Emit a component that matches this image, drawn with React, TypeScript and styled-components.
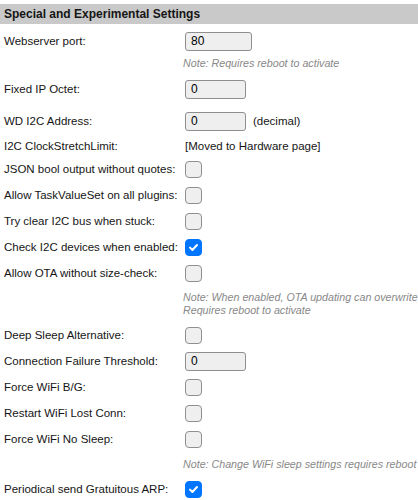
import React from "react";
import styled, { createGlobalStyle } from "styled-components";

const GlobalStyle = createGlobalStyle`
  html, body {
    margin: 0;
    padding: 0;
    background: #fff;
    overflow: hidden;
  }
  body {
    font-family: "Liberation Sans", Arial, sans-serif;
    font-size: 11.5px;
    color: #151515;
  }
`;

const Page = styled.div`
  width: 418px;
  height: 500px;
  overflow: hidden;
  padding-top: 4px;
  box-sizing: border-box;
`;

const Header = styled.div`
  height: 20px;
  background: #c9c9c9;
  font-weight: bold;
  font-size: 12px;
  display: flex;
  align-items: center;
  padding-left: 4px;
  margin-bottom: 4px;
`;

const Row = styled.div<{ $h: number }>`
  height: ${(p) => p.$h}px;
  display: grid;
  grid-template-columns: 185px 1fr;
  align-items: center;
`;

const Label = styled.div`
  padding-left: 4px;
  white-space: nowrap;
`;

const Value = styled.div`
  display: flex;
  align-items: center;
  gap: 7px;
  white-space: nowrap;
`;

const Note = styled.div`
  font-style: italic;
  font-size: 10.7px;
  color: #888;
  line-height: 13px;
  white-space: nowrap;
  margin-left: -2px;
`;

const TextBox = styled.div<{ $w: number }>`
  width: ${(p) => p.$w}px;
  height: 19px;
  box-sizing: border-box;
  background: #efefef;
  border: 1px solid #8f8f8f;
  border-radius: 3px;
  padding-left: 5px;
  display: flex;
  align-items: center;
  font-size: 12px;
  color: #000;
`;

const CheckBox = styled.span<{ $checked?: boolean }>`
  width: 17px;
  height: 17px;
  box-sizing: border-box;
  border-radius: 4px;
  border: 1px solid ${(p) => (p.$checked ? "#0075ff" : "#8f8f8f")};
  background: ${(p) => (p.$checked ? "#0075ff" : "#efefef")};
  display: flex;
  align-items: center;
  justify-content: center;
`;

const Check: React.FC<{ checked?: boolean }> = ({ checked }) => (
  <CheckBox $checked={checked}>
    {checked && (
      <svg width="11" height="11" viewBox="0 0 11 11">
        <path
          d="M2 5.6 L4.4 8 L9 3"
          fill="none"
          stroke="#fff"
          strokeWidth="2"
          strokeLinecap="round"
          strokeLinejoin="round"
        />
      </svg>
    )}
  </CheckBox>
);

type Item =
  | { kind: "text"; label: string; value: string; w: number; h: number; suffix?: string }
  | { kind: "check"; label: string; checked?: boolean; h: number }
  | { kind: "plain"; label: string; value: string; h: number }
  | { kind: "note"; lines: string[]; h: number };

const items: Item[] = [
  { kind: "text", label: "Webserver port:", value: "80", w: 67, h: 26 },
  { kind: "note", lines: ["Note: Requires reboot to activate"], h: 18 },
  { kind: "text", label: "Fixed IP Octet:", value: "0", w: 61, h: 34 },
  { kind: "text", label: "WD I2C Address:", value: "0", w: 61, h: 30, suffix: "(decimal)" },
  { kind: "plain", label: "I2C ClockStretchLimit:", value: "[Moved to Hardware page]", h: 20 },
  { kind: "check", label: "JSON bool output without quotes:", h: 26 },
  { kind: "check", label: "Allow TaskValueSet on all plugins:", h: 26 },
  { kind: "check", label: "Try clear I2C bus when stuck:", h: 26 },
  { kind: "check", label: "Check I2C devices when enabled:", checked: true, h: 26 },
  { kind: "check", label: "Allow OTA without size-check:", h: 26 },
  {
    kind: "note",
    lines: ["Note: When enabled, OTA updating can overwrite", "Requires reboot to activate"],
    h: 36,
  },
  { kind: "check", label: "Deep Sleep Alternative:", h: 26 },
  { kind: "text", label: "Connection Failure Threshold:", value: "0", w: 61, h: 26 },
  { kind: "check", label: "Force WiFi B/G:", h: 26 },
  { kind: "check", label: "Restart WiFi Lost Conn:", h: 26 },
  { kind: "check", label: "Force WiFi No Sleep:", h: 26 },
  { kind: "note", lines: ["Note: Change WiFi sleep settings requires reboot"], h: 24 },
  { kind: "check", label: "Periodical send Gratuitous ARP:", checked: true, h: 26 },
];

const App: React.FC = () => {
  return (
    <>
      <GlobalStyle />
      <Page>
        <Header>Special and Experimental Settings</Header>
        {items.map((it, i) => {
          if (it.kind === "note") {
            return (
              <Row key={i} $h={it.h}>
                <Label />
                <Note>
                  {it.lines.map((l) => (
                    <div key={l}>{l}</div>
                  ))}
                </Note>
              </Row>
            );
          }
          return (
            <Row key={i} $h={it.h}>
              <Label>{it.label}</Label>
              <Value>
                {it.kind === "text" && (
                  <>
                    <TextBox $w={it.w}>{it.value}</TextBox>
                    {it.suffix && <span>{it.suffix}</span>}
                  </>
                )}
                {it.kind === "check" && <Check checked={it.checked} />}
                {it.kind === "plain" && <span>{it.value}</span>}
              </Value>
            </Row>
          );
        })}
      </Page>
    </>
  );
};

export default App;
